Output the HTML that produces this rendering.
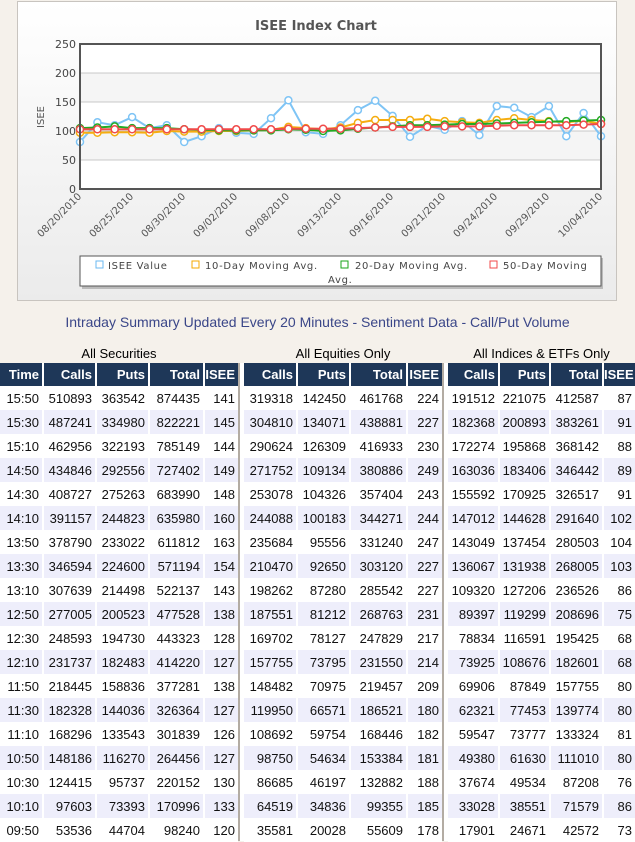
<!DOCTYPE html>
<html><head><meta charset="utf-8"><style>
body{margin:0;width:635px;height:841px;background:#f5f1eb;position:relative;overflow:hidden;font-family:"Liberation Sans",Arial,sans-serif}
#chart{position:absolute;left:17px;top:1px;width:598px;height:298px;border:1px solid #c8c4bf;background:linear-gradient(#fff,#ebebeb)}
#title{position:absolute;left:0;top:314px;width:635px;text-align:center;font-size:14px;color:#3a4688}
.sec{position:absolute;top:346px;font-size:13px;color:#000;text-align:center}
table{position:absolute;top:363px;border-collapse:collapse;table-layout:fixed;font-size:13px;background:#fff}
th{background:#1e3758;color:#fff;font-weight:bold;height:23px;text-align:right;padding:0 3px 0 0;border-right:2px solid #fff;box-sizing:border-box}
td{height:24px;text-align:right;padding:0 3px 0 0;border-right:2px solid #fff;box-sizing:border-box;color:#111}
tr:nth-child(even) td{background:#eeeefb}
tr:nth-child(odd) td{background:#fff}
th:last-child,td:last-child{border-right:0}
.div{position:absolute;top:363px;height:478px;width:6px;background:#fff;border-left:2px solid #b3aca3;box-sizing:border-box}
</style></head><body>
<div id="chart"></div>
<svg style="position:absolute;left:0;top:0" width="635" height="300" font-family="DejaVu Sans,sans-serif">
<text x="316" y="30" text-anchor="middle" font-size="13" font-weight="bold" fill="#555">ISEE Index Chart</text>
<rect x="80" y="44" width="521" height="145" fill="#fff"/>
<rect x="80" y="73" width="521" height="29" fill="#f5f5f5"/>
<rect x="80" y="131" width="521" height="29" fill="#f5f5f5"/>
<g stroke="#c8c8c8" stroke-width="1"><line x1="80" y1="73" x2="601" y2="73"/><line x1="80" y1="102" x2="601" y2="102"/><line x1="80" y1="131" x2="601" y2="131"/><line x1="80" y1="160" x2="601" y2="160"/></g>
<g font-size="11" fill="#444" text-anchor="end"><text x="76" y="48">250</text><text x="76" y="77">200</text><text x="76" y="106">150</text><text x="76" y="135">100</text><text x="76" y="164">50</text><text x="76" y="193">0</text></g>
<text transform="translate(44,117) rotate(-90)" text-anchor="middle" font-size="10" fill="#555">ISEE</text>
<g id="lines"></g>
<rect x="80" y="44" width="521" height="145" fill="none" stroke="#555" stroke-width="2"/>
<g font-size="10" fill="#555" text-anchor="end">
<text transform="translate(82,197) rotate(-45)">08/20/2010</text>
<text transform="translate(134,197) rotate(-45)">08/25/2010</text>
<text transform="translate(186,197) rotate(-45)">08/30/2010</text>
<text transform="translate(238,197) rotate(-45)">09/02/2010</text>
<text transform="translate(290,197) rotate(-45)">09/08/2010</text>
<text transform="translate(342,197) rotate(-45)">09/13/2010</text>
<text transform="translate(394,197) rotate(-45)">09/16/2010</text>
<text transform="translate(446,197) rotate(-45)">09/21/2010</text>
<text transform="translate(498,197) rotate(-45)">09/24/2010</text>
<text transform="translate(550,197) rotate(-45)">09/29/2010</text>
<text transform="translate(603,197) rotate(-45)">10/04/2010</text>
</g>
<rect x="82" y="258" width="521" height="31" fill="#bbb"/>
<rect x="80" y="256" width="521" height="30" fill="#fff" stroke="#555" stroke-width="1"/>
<g font-size="10" fill="#444" letter-spacing="0.7">
<rect x="96" y="261" width="7" height="7" fill="none" stroke="#6bb8f0"/><text x="108" y="269">ISEE Value</text>
<rect x="192" y="261" width="7" height="7" fill="none" stroke="#f5a800"/><text x="205" y="269">10-Day Moving Avg.</text>
<rect x="341" y="261" width="7" height="7" fill="none" stroke="#1aa31a"/><text x="355" y="269">20-Day Moving Avg.</text>
<rect x="490" y="261" width="7" height="7" fill="none" stroke="#f04848"/><text x="503" y="269">50-Day Moving</text>
<text x="328" y="283">Avg.</text>
</g>
</svg>
<div id="title">Intraday Summary Updated Every 20 Minutes - Sentiment Data - Call/Put Volume</div>
<div class="sec" style="left:0;width:238px">All Securities</div>
<div class="sec" style="left:244px;width:198px">All Equities Only</div>
<div class="sec" style="left:448px;width:187px">All Indices &amp; ETFs Only</div>
<div class="div" style="left:238px"></div>
<div class="div" style="left:442px"></div>
<table style="left:0;width:238px"><colgroup><col style="width:43px"><col style="width:53px"><col style="width:53px"><col style="width:55px"><col style="width:34px"></colgroup>
<thead><tr><th>Time</th><th>Calls</th><th>Puts</th><th>Total</th><th>ISEE</th></tr></thead><tbody id="t1"></tbody></table>
<table style="left:244px;width:198px"><colgroup><col style="width:53px"><col style="width:53px"><col style="width:57px"><col style="width:35px"></colgroup>
<thead><tr><th>Calls</th><th>Puts</th><th>Total</th><th>ISEE</th></tr></thead><tbody id="t2"></tbody></table>
<table style="left:448px;width:187px"><colgroup><col style="width:51px"><col style="width:51px"><col style="width:53px"><col style="width:32px"></colgroup>
<thead><tr><th>Calls</th><th>Puts</th><th>Total</th><th>ISEE</th></tr></thead><tbody id="t3"></tbody></table>
<script>
var R=[
["15:50","510893","363542","874435","141","319318","142450","461768","224","191512","221075","412587","87"],
["15:30","487241","334980","822221","145","304810","134071","438881","227","182368","200893","383261","91"],
["15:10","462956","322193","785149","144","290624","126309","416933","230","172274","195868","368142","88"],
["14:50","434846","292556","727402","149","271752","109134","380886","249","163036","183406","346442","89"],
["14:30","408727","275263","683990","148","253078","104326","357404","243","155592","170925","326517","91"],
["14:10","391157","244823","635980","160","244088","100183","344271","244","147012","144628","291640","102"],
["13:50","378790","233022","611812","163","235684","95556","331240","247","143049","137454","280503","104"],
["13:30","346594","224600","571194","154","210470","92650","303120","227","136067","131938","268005","103"],
["13:10","307639","214498","522137","143","198262","87280","285542","227","109320","127206","236526","86"],
["12:50","277005","200523","477528","138","187551","81212","268763","231","89397","119299","208696","75"],
["12:30","248593","194730","443323","128","169702","78127","247829","217","78834","116591","195425","68"],
["12:10","231737","182483","414220","127","157755","73795","231550","214","73925","108676","182601","68"],
["11:50","218445","158836","377281","138","148482","70975","219457","209","69906","87849","157755","80"],
["11:30","182328","144036","326364","127","119950","66571","186521","180","62321","77453","139774","80"],
["11:10","168296","133543","301839","126","108692","59754","168446","182","59547","73777","133324","81"],
["10:50","148186","116270","264456","127","98750","54634","153384","181","49380","61630","111010","80"],
["10:30","124415","95737","220152","130","86685","46197","132882","188","37674","49534","87208","76"],
["10:10","97603","73393","170996","133","64519","34836","99355","185","33028","38551","71579","86"],
["09:50","53536","44704","98240","120","35581","20028","55609","178","17901","24671","42572","73"]];
function row(a){return "<tr>"+a.map(function(x){return "<td>"+x+"</td>"}).join("")+"</tr>"}
var h1="",h2="",h3="";R.forEach(function(r){h1+=row(r.slice(0,5));h2+=row(r.slice(5,9));h3+=row(r.slice(9))});
document.getElementById("t1").innerHTML=h1;document.getElementById("t2").innerHTML=h2;document.getElementById("t3").innerHTML=h3;
var xs=[],i;for(i=0;i<31;i++)xs.push(80+i*521/30);
var isee=[81,115,110,124,105,110,81,91,105,97,95,122,153,98,95,110,136,152,126,90,109,102,117,93,143,140,124,143,91,131,91];
var m10=[97,97,98,98,97,100,99,99,100,100,101,102,107,105,103,106,114,119,119,119,121,117,115,114,119,122,119,117,115,118,112];
var m20=[105,106,108,105,105,105,103,102,101,101,101,101,103,102,100,101,104,106,108,110,110,111,112,112,113,114,115,116,117,118,119];
var m50=[103,103,103,103,103,103,103,103,103,103,103,103,104,104,104,104,105,106,107,107,107,108,108,108,109,110,110,110,110,111,112];
var S=[[isee,"#7ec4f5"],[m10,"#f5ad10"],[m20,"#22aa22"],[m50,"#f04a4a"]],g="";
S.forEach(function(s){var p=s[0].map(function(v,i){return xs[i].toFixed(1)+","+(189-v*0.58).toFixed(1)}).join(" ");
g+='<polyline points="'+p+'" fill="none" stroke="'+s[1]+'" stroke-width="2"/>';
s[0].forEach(function(v,i){g+='<circle cx="'+xs[i].toFixed(1)+'" cy="'+(189-v*0.58).toFixed(1)+'" r="3.5" fill="#fff" stroke="'+s[1]+'" stroke-width="1.5"/>'})});
document.getElementById("lines").innerHTML=g;
</script>
</body></html>
